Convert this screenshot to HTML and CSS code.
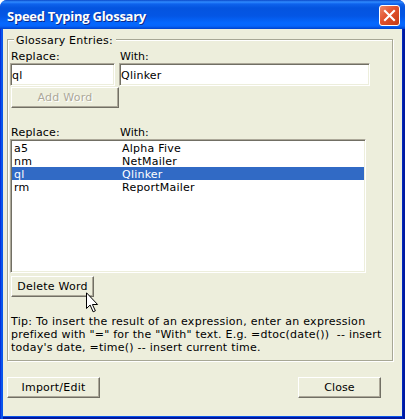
FILE: index.html
```html
<!DOCTYPE html>
<html lang="en">
<head>
<meta charset="utf-8">
<title>Speed Typing Glossary</title>
<link rel="stylesheet" href="styles.css">
</head>
<body>
<div class="window">
  <header class="titlebar">
    <h1 class="title">Speed Typing Glossary</h1>
    <button class="close" aria-label="Close window">
      <svg width="21" height="21" viewBox="0 0 21 21">
        <defs><linearGradient id="red" x1="0" y1="0" x2="1" y2="1"><stop offset="0" stop-color="#ee8a6c"/><stop offset=".45" stop-color="#e2512c"/><stop offset="1" stop-color="#c43a12"/></linearGradient></defs>
        <rect x=".5" y=".5" width="20" height="20" rx="2.5" fill="url(#red)" stroke="#fff"/>
        <path d="M6 6l9 9M15 6l-9 9" stroke="#fff" stroke-width="2.1" stroke-linecap="square"/>
      </svg>
    </button>
  </header>
  <main class="client">
    <section class="group">
      <h2 class="legend">Glossary Entries:</h2>
      <div class="labels"><span class="col-replace">Replace:</span><span class="with">With:</span></div>
      <div class="fields"><div class="field field-replace">ql</div><div class="field field-with">Qlinker</div></div>
      <button class="button add" disabled>Add Word</button>
      <div class="labels labels-list"><span class="col-replace">Replace:</span><span class="with">With:</span></div>
      <div class="list">
        <div class="row"><span class="key">a5</span><span>Alpha Five</span></div>
        <div class="row"><span class="key">nm</span><span>NetMailer</span></div>
        <div class="row selected"><span class="key">ql</span><span>Qlinker</span></div>
        <div class="row"><span class="key">rm</span><span>ReportMailer</span></div>
      </div>
      <button class="button delete">Delete Word
        <svg class="cursor" width="13" height="21" viewBox="0 0 13 21"><path d="M.5.8v15.7l3.6-3.5 3 6.8 2.3-1-3-6.3h5.2z" fill="#fff" stroke="#000"/></svg>
      </button>
      <p class="tip"><span class="first">Tip: To insert the result of an expression, enter an expression</span><br><span>prefixed with "=" for the "With" text. E.g. =dtoc(date())&nbsp; -- insert</span><br><span>today's date, =time() -- insert current time.</span></p>
    </section>
    <footer class="actions"><button class="button import">Import/Edit</button><button class="button dismiss">Close</button></footer>
  </main>
</div>
</body>
</html>
```
FILE: styles.css
```css
* { box-sizing: border-box; }
body {
  margin: 0;
  background: #fff;
  color: #000;
  font: 11px/13px "DejaVu Sans", sans-serif;
  letter-spacing: 0.23px;
}
h1, h2, p { margin: 0; font-weight: normal; }
.window {
  width: 405px;
  height: 419px;
  overflow: hidden;
  border-radius: 7px 7px 0 0;
  background: linear-gradient(90deg, #0831d9 0 1px, #0855ec 1px 3px, #0038d8 402px, #0019a0 403px);
}
.titlebar {
  display: flex;
  justify-content: space-between;
  height: 29px;
  padding: 5px 5px 0 7px;
  background: linear-gradient(#0a48c8 0, #2f8bff 2px, #0e62ec 4px, #0454df 8px, #0456e5 16px, #0568ff 23px, #0665fb 26px, #0042cc 29px);
}
.title {
  color: #fff;
  font: bold 13px/22px "Open Sans", sans-serif;
  letter-spacing: -0.25px;
  text-shadow: 1px 1px #0b2a8c;
}
.close { width: 21px; height: 21px; padding: 0; border: 0; background: none; }
.close svg { display: block; }
.client {
  height: 387px;
  margin: 0 3px;
  padding: 10px 4px 0;
  background: #edeedc;
  box-shadow: 0 1px #0855ec, 0 3px #0019a0;
}
.group {
  width: 386px;
  height: 322px;
  padding: 0 2px;
  border: 1px solid #a7a795;
  box-shadow: 1px 1px #fff, inset 1px 1px #fff;
}
.legend {
  width: 102px;
  height: 13px;
  margin: -6px 0 0 4px;
  padding-left: 2px;
  background: #edeedc;
  font-size: 11px;
  white-space: nowrap;
}
.labels { display: flex; height: 13px; margin: 3px 0 0 1px; }
.col-replace { width: 109px; }
.with { letter-spacing: 0; }
.fields { display: flex; gap: 4px; }
.field, .list {
  padding: 1px;
  border: 1px solid;
  border-color: #aca899 #fff #fff #aca899;
  background: #fff;
  box-shadow: inset 1px 1px #716f64, inset -1px -1px #edeedc;
}
.field { height: 23px; padding-top: 5px; }
.field-replace { width: 105px; }
.field-with { width: 251px; }
.button {
  display: block;
  position: relative;
  height: 21px;
  padding: 0;
  border: 1px solid;
  border-color: #fff #716f64 #716f64 #fff;
  box-shadow: inset -1px -1px #aca899;
  background: #edeedc;
  color: #000;
  font: inherit;
  letter-spacing: inherit;
  text-align: center;
  white-space: nowrap;
}
.add { width: 108px; margin: 1px 0 0 1px; color: #aca899; text-shadow: 1px 1px #fff; }
.labels-list { margin-top: 18px; }
.list { width: 356px; height: 134px; }
.row { display: flex; height: 13px; padding-left: 2px; line-height: 15px; }
.key { width: 108px; }
.selected { background: #316ac5; color: #fff; }
.delete { width: 83px; margin: 3px 0 0 1px; }
.cursor { position: absolute; left: 74px; top: 15px; z-index: 1; }
.tip { margin: 18px 0 0 1px; white-space: nowrap; }
.first { letter-spacing: 0.28px; }
.actions { display: flex; justify-content: space-between; width: 374px; padding-top: 16px; }
.import { width: 93px; }
.dismiss { width: 83px; letter-spacing: 0.1px; }
```
